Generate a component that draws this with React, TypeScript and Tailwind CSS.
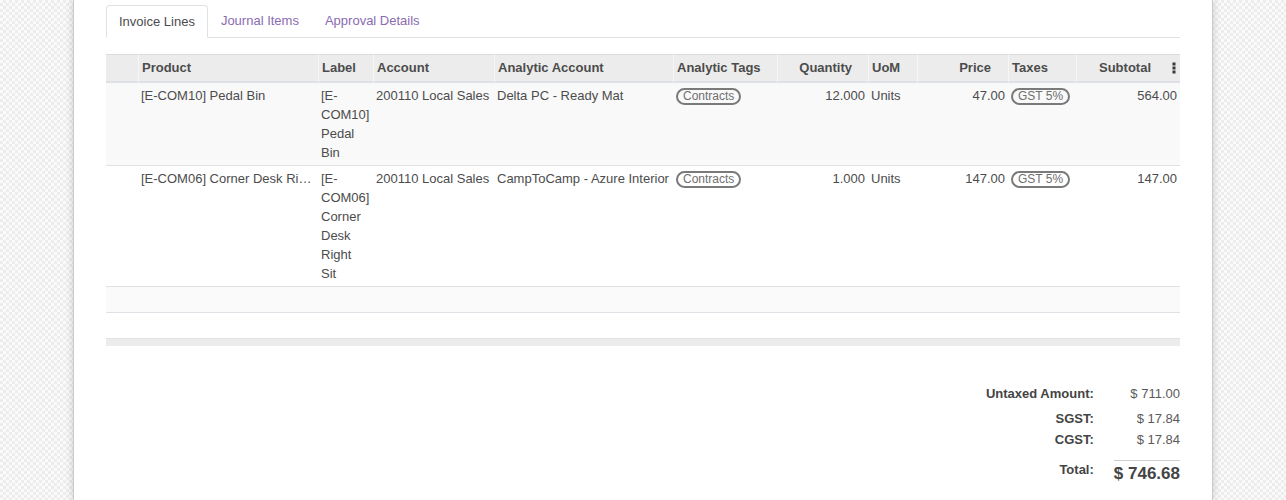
import React from 'react';

interface Line {
  product: string;
  label: string[];
  account: string;
  analytic: string;
  tag: string;
  quantity: string;
  uom: string;
  price: string;
  tax: string;
  subtotal: string;
}

const lines: Line[] = [
  {
    product: '[E-COM10] Pedal Bin',
    label: ['[E-', 'COM10]', 'Pedal', 'Bin'],
    account: '200110 Local Sales',
    analytic: 'Delta PC - Ready Mat',
    tag: 'Contracts',
    quantity: '12.000',
    uom: 'Units',
    price: '47.00',
    tax: 'GST 5%',
    subtotal: '564.00',
  },
  {
    product: '[E-COM06] Corner Desk Right Sit',
    label: ['[E-', 'COM06]', 'Corner', 'Desk', 'Right', 'Sit'],
    account: '200110 Local Sales',
    analytic: 'CampToCamp - Azure Interior',
    tag: 'Contracts',
    quantity: '1.000',
    uom: 'Units',
    price: '147.00',
    tax: 'GST 5%',
    subtotal: '147.00',
  },
];

const widths = [32, 180, 55, 121, 179, 104, 91, 49, 91, 68, 104];

function Tag({ children }: { children: React.ReactNode }) {
  return (
    <span className="inline-block rounded-full border-2 border-[#7a7a7a] px-[5px] text-[12px] leading-[13px] text-[#6f6f6f] whitespace-nowrap">
      {children}
    </span>
  );
}

function Kebab() {
  return (
    <svg width="4" height="12" viewBox="0 0 4 12" className="ml-[21px] shrink-0">
      <rect x="0.5" y="0.5" width="3" height="3" fill="#3a3a3a" />
      <rect x="0.5" y="4.5" width="3" height="3" fill="#3a3a3a" />
      <rect x="0.5" y="8.5" width="3" height="3" fill="#3a3a3a" />
    </svg>
  );
}

export default function App() {
  const th =
    'border-t border-b-2 border-t-[#dcdcdc] border-b-[#dde0e4] border-l border-l-[#f6f6f6] bg-[#ececec] pt-[3px] pb-[4px] px-[3px] font-bold text-left';
  const td = 'border-b border-[#dee2e6] py-[3px] px-[3px] align-top';

  return (
    <div
      className="min-h-[500px] bg-[repeating-conic-gradient(#ededed_0_25%,#fafafa_0_50%)] bg-[length:6px_6px] text-[13px] leading-[19px] text-[#4c4c4c]"
      style={{ fontFamily: '"Liberation Sans", Arial, sans-serif' }}
    >
      <div className="mx-auto min-h-[500px] w-[1140px] border-x border-[#c9c8d3] bg-white px-[32px] pt-[5px] shadow-[0_0_8px_rgba(0,0,0,0.18)]">
        {/* tabs */}
        <div className="flex border-b border-[#dee2e6]">
          <div className="-mb-px rounded-t-[4px] border border-[#dee2e6] border-b-white bg-white px-[12px] py-[6px] text-[#4c4c4c]">
            Invoice Lines
          </div>
          <div className="px-[13px] py-[6px] text-[#8a6bb3]">Journal Items</div>
          <div className="px-[13px] py-[6px] text-[#8a6bb3]">Approval Details</div>
        </div>

        {/* lines */}
        <table className="mt-[16px] w-full table-fixed border-separate border-spacing-0">
          <colgroup>
            {widths.map((w, i) => (
              <col key={i} style={{ width: w }} />
            ))}
          </colgroup>
          <thead>
            <tr>
              <th className={th + ' border-l-0'}></th>
              <th className={th}>Product</th>
              <th className={th}>Label</th>
              <th className={th}>Account</th>
              <th className={th}>Analytic Account</th>
              <th className={th}>Analytic Tags</th>
              <th className={th + ' text-right pr-[16px]'}>Quantity</th>
              <th className={th}>UoM</th>
              <th className={th + ' text-right pr-[17px]'}>Price</th>
              <th className={th}>Taxes</th>
              <th className={th + ' pr-[4px]'}>
                <div className="flex items-center justify-end">
                  <span>Subtotal</span>
                  <Kebab />
                </div>
              </th>
            </tr>
          </thead>
          <tbody>
            {lines.map((l, i) => (
              <tr key={i} className={i % 2 === 0 ? 'bg-[#f9f9f9]' : 'bg-white'}>
                <td className={td}></td>
                <td className={td + ' truncate'}>{l.product}</td>
                <td className={td}>
                  {l.label.map((s, j) => (
                    <div key={j} className="whitespace-nowrap">
                      {s}
                    </div>
                  ))}
                </td>
                <td className={td + ' whitespace-nowrap'}>{l.account}</td>
                <td className={td + ' whitespace-nowrap'}>{l.analytic}</td>
                <td className={td}>
                  <Tag>{l.tag}</Tag>
                </td>
                <td className={td + ' text-right'}>{l.quantity}</td>
                <td className={td}>{l.uom}</td>
                <td className={td + ' text-right'}>{l.price}</td>
                <td className={td}>
                  <Tag>{l.tax}</Tag>
                </td>
                <td className={td + ' text-right'}>{l.subtotal}</td>
              </tr>
            ))}
            <tr className="bg-[#fafafa]">
              <td colSpan={11} className={td}>
                &nbsp;
              </td>
            </tr>
            <tr className="bg-white">
              <td colSpan={11} className={td}>
                &nbsp;
              </td>
            </tr>
          </tbody>
          <tfoot>
            <tr>
              <td colSpan={11} className="h-[7px] bg-[#ececec] p-0"></td>
            </tr>
          </tfoot>
        </table>

        {/* totals */}
        <div className="mt-[38px] flex justify-end">
          <table className="border-separate border-spacing-0">
            <tbody>
              <tr>
                <td className="pb-[6px] pr-[20px] text-right font-bold text-[#444]">Untaxed Amount:</td>
                <td className="pb-[6px] text-right text-[#5a5a5a]">$ 711.00</td>
              </tr>
              <tr>
                <td className="pb-[2px] pr-[20px] text-right font-bold text-[#444]">SGST:</td>
                <td className="pb-[2px] text-right text-[#5a5a5a]">$ 17.84</td>
              </tr>
              <tr>
                <td className="pb-[2px] pr-[20px] text-right font-bold text-[#444]">CGST:</td>
                <td className="pb-[2px] text-right text-[#5a5a5a]">$ 17.84</td>
              </tr>
              <tr>
                <td className="h-[9px] p-0"></td>
                <td className="h-[9px] p-0"></td>
              </tr>
              <tr>
                <td className="pr-[20px] text-right align-top font-bold text-[#444]">Total:</td>
                <td className="border-t border-[#cfcfcf] text-right text-[17px] leading-[25px] font-bold text-[#444]">
                  $ 746.68
                </td>
              </tr>
            </tbody>
          </table>
        </div>
      </div>
    </div>
  );
}
